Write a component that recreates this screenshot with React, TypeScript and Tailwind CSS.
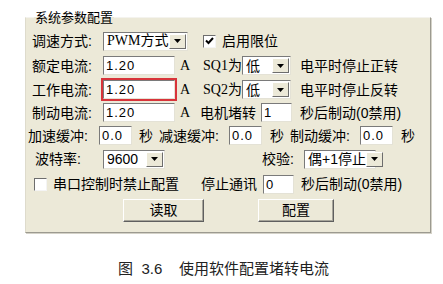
import React from 'react';

const FONT = "font-['Liberation_Sans','Noto_Sans_CJK_SC',sans-serif]";

const Field: React.FC<{ className?: string; children?: React.ReactNode }> = ({ className = '', children }) => (
  <div
    className={`h-[19px] bg-white border border-t-[#7a7a7a] border-l-[#7a7a7a] border-r-[#e4e2d6] border-b-[#e4e2d6] flex items-center pl-[2px] text-[13px] tracking-[1px] leading-none ${className}`}
  >
    {children}
  </div>
);

const Arrow = () => (
  <div className="w-[17px] h-[15px] mr-[1px] shrink-0 bg-[#ece9d8] border border-t-white border-l-white border-r-[#6d6d6d] border-b-[#6d6d6d] flex items-center justify-center">
    <svg width="7" height="4" viewBox="0 0 7 4">
      <path d="M0 0h7L3.5 4z" fill="#000" />
    </svg>
  </div>
);

const Select: React.FC<{ className?: string; value: string; textClass?: string }> = ({ className = '', value, textClass = '' }) => (
  <div
    className={`h-[19px] shrink-0 bg-white border border-t-[#7a7a7a] border-l-[#7a7a7a] border-r-[#e4e2d6] border-b-[#e4e2d6] flex items-center ${className}`}
  >
    <span className={`flex-1 pl-[3px] text-[14px] leading-none whitespace-nowrap ${textClass}`}>{value}</span>
    <Arrow />
  </div>
);

const Check: React.FC<{ checked?: boolean }> = ({ checked }) => (
  <div className="w-[13px] h-[13px] bg-white border border-t-[#6d6d6d] border-l-[#6d6d6d] border-r-[#f4f4f4] border-b-[#f4f4f4] flex items-center justify-center">
    {checked && (
      <svg width="9" height="8" viewBox="0 0 9 8">
        <path d="M1 3.5 3.5 6 8 1" stroke="#000" strokeWidth="2" fill="none" />
      </svg>
    )}
  </div>
);

const Button: React.FC<{ className?: string; children: React.ReactNode }> = ({ className = '', children }) => (
  <div
    className={`h-[23px] bg-[#ece9d8] border border-t-white border-l-white border-r-[#5f5f5f] border-b-[#5f5f5f] shadow-[inset_-1px_-1px_0_#a7a59a] flex items-center justify-center text-[14px] ${className}`}
  >
    {children}
  </div>
);

const L: React.FC<{ className?: string; children: React.ReactNode }> = ({ className = '', children }) => (
  <span className={`shrink-0 text-[14px] leading-none whitespace-nowrap ${className}`}>{children}</span>
);

export default function App() {
  return (
    <div className={`w-[443px] h-[284px] bg-white text-black ${FONT}`}>
      <fieldset className="ml-[25px] mt-[10px] w-[406px] h-[223px] bg-[#ece9d8] border border-t-[#f4f3ee] border-l-[#dedbcc] border-r-[#9c9a90] border-b-[#9c9a90] shadow-[1px_1px_0_#d4d2c8] pl-[6px] pr-0 pb-0 pt-[4px]">
        <legend className="ml-[2px] px-[1px] text-[13px] leading-[15px]">系统参数配置</legend>

        {/* row 1 */}
        <div className="h-[24px] flex items-center">
          <L className="w-[71px]">调速方式:</L>
          <Select className="w-[85px]" value="PWM方式" textClass="text-[13px] font-['Liberation_Serif','Noto_Sans_CJK_SC',serif]" />
          <div className="ml-[15px]"><Check checked /></div>
          <L className="ml-[6px]">启用限位</L>
        </div>

        {/* row 2 */}
        <div className="h-[25px] flex items-center">
          <L className="w-[71px]">额定电流:</L>
          <Field className="w-[72px]">1.20</Field>
          <L className="ml-[5px] w-[23px] text-[12px] font-['Liberation_Serif',serif]">A</L>
          <L className="w-[39px] text-[13px] font-['Liberation_Serif','Noto_Sans_CJK_SC',serif]">SQ1为</L>
          <Select className="w-[49px]" value="低" />
          <L className="ml-[9px]">电平时停止正转</L>
        </div>

        {/* row 3 */}
        <div className="h-[23px] flex items-center">
          <L className="w-[71px]">工作电流:</L>
          <Field className="w-[72px] outline-2 outline-[#d8343a]">1.20</Field>
          <L className="ml-[5px] w-[23px] text-[12px] font-['Liberation_Serif',serif]">A</L>
          <L className="w-[39px] text-[13px] font-['Liberation_Serif','Noto_Sans_CJK_SC',serif]">SQ2为</L>
          <Select className="w-[49px]" value="低" />
          <L className="ml-[9px]">电平时停止反转</L>
        </div>

        {/* row 4 */}
        <div className="h-[23px] flex items-center">
          <L className="w-[71px]">制动电流:</L>
          <Field className="w-[72px]">1.20</Field>
          <L className="ml-[5px] w-[20px] text-[12px] font-['Liberation_Serif',serif]">A</L>
          <L className="w-[61px]">电机堵转</L>
          <Field className="w-[31px]">1</Field>
          <L className="ml-[8px]">秒后制动(0禁用)</L>
        </div>

        {/* row 5 */}
        <div className="h-[23px] flex items-center -ml-[4px]">
          <L className="w-[71px]">加速缓冲:</L>
          <Field className="w-[33px]">0.0</Field>
          <L className="ml-[7px] w-[20px]">秒</L>
          <L className="w-[70px]">减速缓冲:</L>
          <Field className="w-[33px]">0.0</Field>
          <L className="ml-[8px] w-[20px]">秒</L>
          <L className="w-[70px]">制动缓冲:</L>
          <Field className="w-[33px]">0.0</Field>
          <L className="ml-[8px]">秒</L>
        </div>

        {/* row 6 */}
        <div className="h-[24px] flex items-center">
          <L className="ml-[3px] w-[68px]">波特率:</L>
          <Select className="w-[62px]" value="9600" />
          <L className="ml-[97px] w-[42px]">校验:</L>
          <Select className="w-[72px]" value="偶+1停止" textClass="text-[12px] pl-[2px]" />
        </div>

        {/* row 7 */}
        <div className="h-[26px] flex items-center">
          <div className="ml-[2px]"><Check /></div>
          <L className="ml-[6px] w-[148px]">串口控制时禁止配置</L>
          <L className="w-[62px]">停止通讯</L>
          <Field className="w-[31px]">0</Field>
          <L className="ml-[7px]">秒后制动(0禁用)</L>
        </div>

        {/* row 8 */}
        <div className="h-[26px] flex items-center">
          <Button className="ml-[91px] w-[81px]">读取</Button>
          <Button className="ml-[54px] w-[76px]">配置</Button>
        </div>
      </fieldset>

      <div className="mt-[28px] flex justify-center text-[15px] text-[#222] leading-none">
        <span className="ml-[4px]">图&nbsp;&nbsp;3.6&nbsp;&nbsp;&nbsp;&nbsp;使用软件配置堵转电流</span>
      </div>
    </div>
  );
}
